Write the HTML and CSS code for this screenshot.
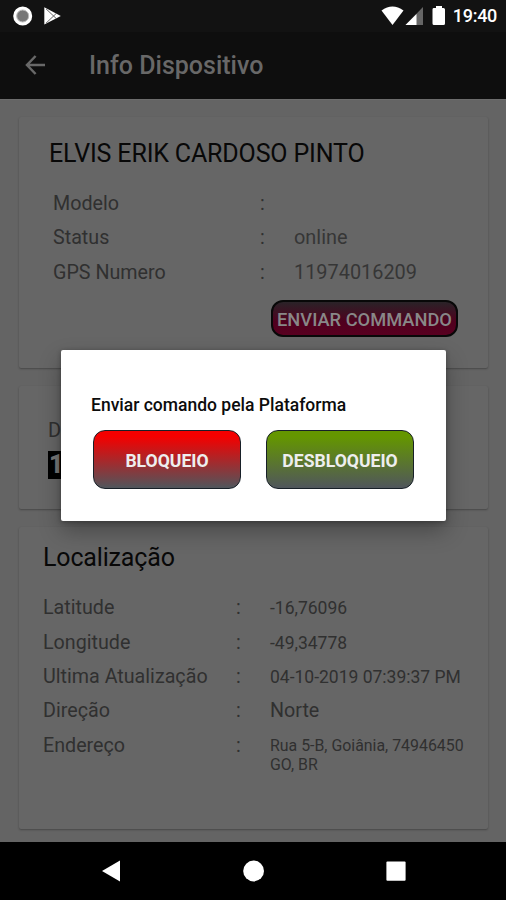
FILE: index.html
```html
<!DOCTYPE html>
<html lang="pt-BR">
<head>
    <meta charset="UTF-8">
    <meta name="viewport" content="width=device-width, initial-scale=1.0">
    <title>Info Dispositivo</title>
    <link rel="stylesheet" href="styles.css">
</head>
<body>
    <div class="phone">
        <div class="status-bar">
            <svg class="status-left" width="52" height="24" viewBox="0 0 52 24">
                <circle cx="12.7" cy="12" r="7.8" fill="#777" stroke="#fff" stroke-width="3.4"/>
                <circle cx="12.7" cy="12" r="6" fill="none" stroke="#bbb" stroke-width="1"/>
                <path d="M34.3 3.2 L50.8 12 L34.3 20.6 Z" fill="#fff"/>
                <path d="M36 4.8 L46 14.3 M36 19.2 L46 9.7" stroke="#666" stroke-width="1" fill="none"/>
            </svg>
            <svg class="status-right" width="66" height="20" viewBox="0 0 66 20">
                <path d="M0.5 4.6 Q11.5 -3.6 22.5 4.6 L11.5 19 Z" fill="#fff"/>
                <path d="M42 1 V19 H24.5 Z" fill="#666"/>
                <path d="M35.5 8 V19 H24.5 Z" fill="#fff"/>
                <path d="M52.5 2 H55 V0 H61 V2 H62.5 Q64 2 64 3.5 V17.5 Q64 19 62.5 19 H53 Q51.5 19 51.5 17.5 V3.5 Q51.5 2 52.5 2 Z" fill="#fff"/>
            </svg>
            <span class="clock">19:40</span>
        </div>

        <div class="app-bar">
            <svg width="22" height="22" viewBox="0 0 22 22">
                <path d="M20 11 H2.5 M10.6 2 L2 11 L10.6 20" fill="none" stroke="#686868" stroke-width="2.5"/>
            </svg>
            <h1>Info Dispositivo</h1>
        </div>

        <div class="content">
            <div class="card device-card">
                <h2>ELVIS ERIK CARDOSO PINTO</h2>
                <div class="info">
                    <span>Modelo</span><span>:</span><span></span>
                    <span>Status</span><span>:</span><span class="value">online</span>
                    <span>GPS Numero</span><span>:</span><span class="value">11974016209</span>
                </div>
                <button class="send-btn">ENVIAR COMMANDO</button>
            </div>

            <div class="card distance-card">
                <span class="distance-label">D</span>
                <span class="counter">1</span>
            </div>

            <div class="card location-card">
                <h2>Localização</h2>
                <div class="info">
                    <span>Latitude</span><span>:</span><span class="small">-16,76096</span>
                    <span>Longitude</span><span>:</span><span class="small">-49,34778</span>
                    <span>Ultima Atualização</span><span>:</span><span class="small">04-10-2019 07:39:37 PM</span>
                    <span>Direção</span><span>:</span><span>Norte</span>
                    <span>Endereço</span><span>:</span><span class="address">Rua 5-B, Goiânia, 74946450<br>GO, BR</span>
                </div>
            </div>
        </div>

        <div class="nav-bar">
            <svg width="22" height="22" viewBox="0 0 22 22"><path d="M1 11 L19 0.5 V21.5 Z" fill="#fff"/></svg>
            <svg width="22" height="22" viewBox="0 0 22 22"><circle cx="10.6" cy="11" r="10.4" fill="#fff"/></svg>
            <svg width="22" height="22" viewBox="0 0 22 22"><rect x="1.4" y="1.6" width="19.2" height="19.2" rx="1" fill="#fff"/></svg>
        </div>

        <div class="dialog">
            <p>Enviar comando pela Plataforma</p>
            <div class="dialog-buttons">
                <button class="block-btn">BLOQUEIO</button>
                <button class="unblock-btn">DESBLOQUEIO</button>
            </div>
        </div>
    </div>
</body>
</html>
```
FILE: styles.css
```css
* {
    box-sizing: border-box;
}

body {
    margin: 0;
    font-family: Roboto, "Liberation Sans", sans-serif;
    background-color: #000;
}

h1, h2, p {
    margin: 0;
}

.phone {
    position: relative;
    width: 506px;
    height: 900px;
    display: flex;
    flex-direction: column;
    overflow: hidden;
    background-color: #646464;
}

.status-bar {
    display: flex;
    align-items: center;
    height: 32px;
    padding: 0 9px 0 10px;
    background-color: #121212;
}

.status-left {
    margin-top: -1px;
}

.status-right {
    margin: -1px 6px 0 auto;
}

.clock {
    color: #fff;
    font-size: 18px;
    font-weight: 500;
    letter-spacing: -0.3px;
    line-height: 32px;
}

.app-bar {
    display: flex;
    align-items: center;
    gap: 42px;
    height: 67px;
    padding-left: 25px;
    background-color: #0e0e0e;
}

.app-bar svg {
    margin-top: -2px;
}

.app-bar h1 {
    color: #686868;
    font-size: 25px;
    font-weight: 500;
    line-height: 30px;
}

.content {
    display: flex;
    flex-direction: column;
    gap: 18px;
    height: 743px;
    padding: 17px 18px 13px 19px;
    border-top: 1px solid #6c6c6c;
}

.card {
    background-color: #666;
    border-radius: 2px;
    box-shadow: 0 1px 2px rgba(0, 0, 0, 0.3);
}

.card h2 {
    color: #080808;
    font-size: 25px;
    font-weight: 400;
    letter-spacing: -0.16px;
    line-height: 30px;
}

.device-card {
    height: 251px;
    padding: 22px 30px 0 30px;
}

.info {
    display: grid;
    grid-auto-rows: 34.3px;
    line-height: 34.3px;
    color: #303030;
    font-size: 19.7px;
    white-space: nowrap;
}

.device-card .info {
    grid-template-columns: 207px 34px 1fr;
    padding: 18px 0 0 4px;
}

.info .value {
    color: #363636;
    font-size: 19.9px;
}

.send-btn {
    display: block;
    width: 187px;
    height: 37px;
    margin: 10px 0 0 auto;
    padding: 2px 0 0;
    border: 2px solid #080808;
    border-radius: 12px;
    background: linear-gradient(#2a2328, #50001e 60%, #580020);
    color: #888;
    font-family: inherit;
    font-size: 18.3px;
    font-weight: 500;
    white-space: nowrap;
}

.distance-card {
    display: flex;
    flex-direction: column;
    align-items: flex-start;
    height: 124px;
    padding: 32px 29px 0;
}

.distance-label {
    color: #303030;
    font-size: 20px;
    line-height: 24px;
}

.counter {
    width: 20px;
    height: 28px;
    margin-top: 9px;
    padding-left: 1px;
    background-color: #000;
    color: #777;
    font-size: 25px;
    font-weight: 900;
    line-height: 28px;
}

.location-card {
    height: 302px;
    padding: 16px 20px 0 24px;
}

.location-card .info {
    grid-template-columns: 193px 34px 1fr;
    padding-top: 18px;
}

.info .small {
    font-size: 17.5px;
}

.info .address {
    padding-top: 7px;
    font-size: 15.9px;
    line-height: 19px;
}

.nav-bar {
    display: flex;
    justify-content: space-between;
    height: 58px;
    padding: 18px 99px 0 101px;
    background-color: #000;
}

.dialog {
    position: absolute;
    top: 350px;
    left: 61px;
    width: 385px;
    height: 171px;
    padding: 44px 32px 0;
    border-radius: 2px;
    background-color: #fff;
    box-shadow: 0 10px 22px rgba(0, 0, 0, 0.3), 0 1px 5px rgba(0, 0, 0, 0.3);
}

.dialog p {
    margin-left: -2px;
    color: #0c0c0c;
    font-size: 17.5px;
    font-weight: 500;
    line-height: 22px;
}

.dialog-buttons {
    display: flex;
    justify-content: space-between;
    margin-top: 14px;
}

.dialog-buttons button {
    width: 148px;
    height: 59px;
    padding: 2px 0 0;
    border: 1.5px solid #182028;
    border-radius: 12px;
    color: #eee;
    font-family: inherit;
    font-size: 17.6px;
    font-weight: 700;
}

.dialog-buttons .block-btn {
    background: linear-gradient(#f40000 10%, #50565c);
}

.dialog-buttons .unblock-btn {
    background: linear-gradient(#649600 10%, #50565c);
}
```
